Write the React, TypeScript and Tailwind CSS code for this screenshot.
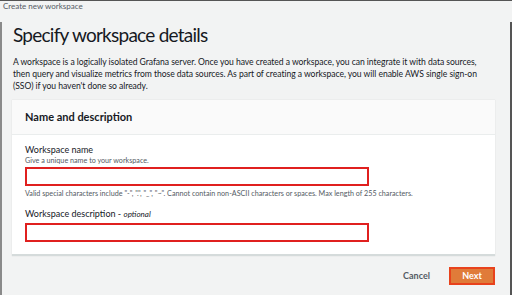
export default function App() {
  return (
    <div className="w-[512px] h-[295px] bg-[#f2f3f3] overflow-hidden relative" style={{ fontFamily: 'Lato, "Noto Sans", sans-serif' }}>
      <div className="h-[11px] flex items-start pl-[3px] text-[8px] leading-[10px] text-[#545b64] border-t border-[#555]">
        Create new workspace
      </div>
      <div className="h-[284px] border-l-2 border-r-2 border-b-2 border-l-[#8a8a8a] border-r-[#555] border-b-[#444] pl-[10px] pr-[15px]">
        <h1 className="mt-[11px] ml-[1px] text-[19px] tracking-[-0.75px] leading-[26px] text-[#16191f]">Specify workspace details</h1>
        <p className="mt-[8px] ml-[1px] text-[8.6px] tracking-[-0.05px] leading-[12px] text-[#16191f] whitespace-nowrap">
          A workspace is a logically isolated Grafana server. Once you have created a workspace, you can integrate it with data sources,
          <br />
          then query and visualize metrics from those data sources. As part of creating a workspace, you will enable AWS single sign-on
          <br />
          (SSO) if you haven't done so already.
        </p>
        <div className="mt-[8px] bg-white border-b-2 border-[#d5dbdb] shadow-[0_0_1px_#ccc]">
          <div className="h-[35px] bg-[#fafafa] border-b border-[#eaeded] flex items-center px-[13px] text-[11px] font-bold text-[#16191f]">
            Name and description
          </div>
          <div className="px-[13px] pt-[9px] pb-[12px]">
            <div className="text-[9px] leading-[12px] text-[#16191f]">Workspace name</div>
            <div className="text-[7.2px] leading-[9px] text-[#545b64]">Give a unique name to your workspace.</div>
            <div className="mt-[2px] w-[344px] h-[19px] border-2 border-[#e0201f] bg-white"></div>
            <div className="mt-[3px] text-[7.2px] leading-[9px] text-[#545b64]">Valid special characters include "-", ".", "_", "~". Cannot contain non-ASCII characters or spaces. Max length of 255 characters.</div>
            <div className="mt-[10px] text-[9px] leading-[12px] text-[#16191f]">Workspace description - <i className="text-[8px]">optional</i></div>
            <div className="mt-[3px] w-[344px] h-[19px] border-2 border-[#e0201f] bg-white"></div>
          </div>
        </div>
        <div className="mt-[11px] flex justify-end items-center gap-[19px]">
          <span className="text-[9px] font-bold text-[#545b64]">Cancel</span>
          <div className="w-[46px] h-[18px] bg-[#e07b39] border-2 border-[#e8421c] flex items-center justify-center text-[9px] font-bold text-white">Next</div>
        </div>
      </div>
    </div>
  );
}
